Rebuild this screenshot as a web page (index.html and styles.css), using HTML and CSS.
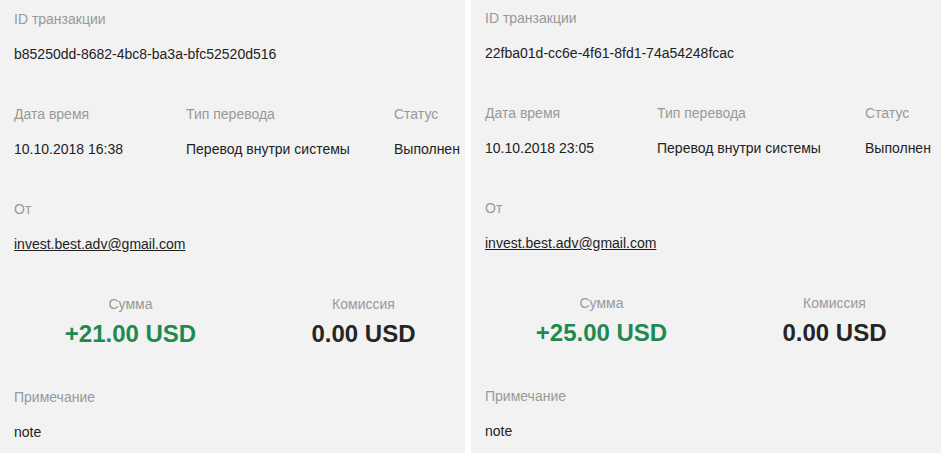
FILE: index.html
```html
<!DOCTYPE html>
<html lang="ru">
<head>
    <meta charset="utf-8">
    <title>Транзакции</title>
    <link rel="stylesheet" href="styles.css">
</head>
<body>
    <div class="cards">
        <!-- first transaction -->
        <div class="card">
            <div class="field">
                <div class="label">ID транзакции</div>
                <div class="value">b85250dd-8682-4bc8-ba3a-bfc52520d516</div>
            </div>
            <div class="field row">
                <div>
                    <div class="label">Дата время</div>
                    <div class="value">10.10.2018 16:38</div>
                </div>
                <div>
                    <div class="label">Тип перевода</div>
                    <div class="value">Перевод внутри системы</div>
                </div>
                <div>
                    <div class="label">Статус</div>
                    <div class="value">Выполнен</div>
                </div>
            </div>
            <div class="field">
                <div class="label">От</div>
                <div class="value"><a href="#" class="email">invest.best.adv@gmail.com</a></div>
            </div>
            <div class="field amounts">
                <div>
                    <div class="label">Сумма</div>
                    <div class="amount plus">+21.00 USD</div>
                </div>
                <div>
                    <div class="label">Комиссия</div>
                    <div class="amount">0.00 USD</div>
                </div>
            </div>
            <div class="field">
                <div class="label">Примечание</div>
                <div class="value">note</div>
            </div>
        </div>

        <!-- second transaction -->
        <div class="card card-second">
            <div class="field">
                <div class="label">ID транзакции</div>
                <div class="value">22fba01d-cc6e-4f61-8fd1-74a54248fcac</div>
            </div>
            <div class="field row">
                <div>
                    <div class="label">Дата время</div>
                    <div class="value">10.10.2018 23:05</div>
                </div>
                <div>
                    <div class="label">Тип перевода</div>
                    <div class="value">Перевод внутри системы</div>
                </div>
                <div>
                    <div class="label">Статус</div>
                    <div class="value">Выполнен</div>
                </div>
            </div>
            <div class="field">
                <div class="label">От</div>
                <div class="value"><a href="#" class="email">invest.best.adv@gmail.com</a></div>
            </div>
            <div class="field amounts">
                <div>
                    <div class="label">Сумма</div>
                    <div class="amount plus">+25.00 USD</div>
                </div>
                <div>
                    <div class="label">Комиссия</div>
                    <div class="amount">0.00 USD</div>
                </div>
            </div>
            <div class="field">
                <div class="label">Примечание</div>
                <div class="value">note</div>
            </div>
        </div>
    </div>
</body>
</html>
```

FILE: styles.css
```css
body {
    margin: 0;
    padding: 0;
    font-family: 'Liberation Sans', Arial, sans-serif;
    font-size: 14px;
    background: #fff;
    color: #222;
}
.cards {
    display: grid;
    grid-template-columns: 465px 470px;
    gap: 6px;
    height: 453px;
    overflow: hidden;
}
.card {
    background-color: #f2f2f2;
    padding: 9px 0 0 14px;
    overflow: visible;
}
.card-second {
    padding-top: 8px;
}
.field {
    margin-bottom: 40px;
}
.label {
    color: #999;
    line-height: 20px;
    margin-bottom: 15px;
}
.value {
    color: #222;
    line-height: 20px;
    white-space: nowrap;
}
.email {
    color: #222;
    text-decoration: underline;
}
.row {
    display: grid;
    grid-template-columns: 172px 208px auto;
}
.amounts {
    display: grid;
    grid-template-columns: 233px 233px;
    text-align: center;
    margin-top: 2px;
    margin-bottom: 39px;
}
.amounts .label {
    margin-bottom: 6px;
}
.amount {
    font-size: 24px;
    font-weight: bold;
    line-height: 28px;
    color: #252525;
    white-space: nowrap;
}
.amount.plus {
    color: #1f8a4f;
}
```
